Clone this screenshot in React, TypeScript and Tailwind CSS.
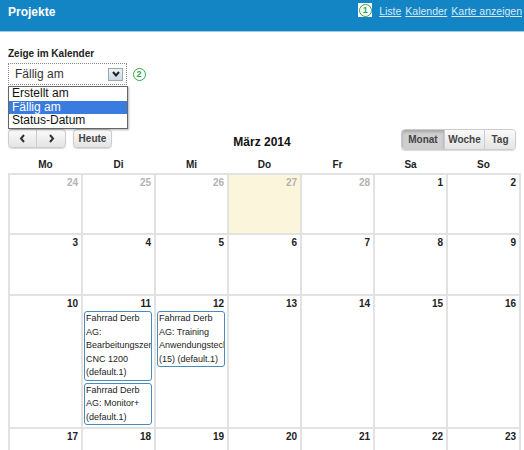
import React from "react";

const days = ["Mo", "Di", "Mi", "Do", "Fr", "Sa", "So"];

type Ev = { lines: string[] };
type Cell = { n: number; other?: boolean; today?: boolean; events?: Ev[] };

const weeks: { h: string; cells: Cell[] }[] = [
  {
    h: "h-[58px]",
    cells: [
      { n: 24, other: true },
      { n: 25, other: true },
      { n: 26, other: true },
      { n: 27, other: true, today: true },
      { n: 28, other: true },
      { n: 1 },
      { n: 2 },
    ],
  },
  { h: "h-[59px]", cells: [3, 4, 5, 6, 7, 8, 9].map((n) => ({ n })) },
  {
    h: "h-[131px]",
    cells: [
      { n: 10 },
      {
        n: 11,
        events: [
          { lines: ["Fahrrad Derb", "AG:", "Bearbeitungszentrum", "CNC 1200", "(default.1)"] },
          { lines: ["Fahrrad Derb", "AG: Monitor+", "(default.1)"] },
        ],
      },
      {
        n: 12,
        events: [{ lines: ["Fahrrad Derb", "AG: Training", "Anwendungstechnik", "(15) (default.1)"] }],
      },
      { n: 13 },
      { n: 14 },
      { n: 15 },
      { n: 16 },
    ],
  },
  { h: "h-[60px]", cells: [17, 18, 19, 20, 21, 22, 23].map((n) => ({ n })) },
];

function Marker({ n, boxed }: { n: number; boxed?: boolean }) {
  return (
    <span className={`flex items-center justify-center w-[14px] h-[14px] ${boxed ? "bg-white" : ""}`}>
      <span className="flex items-center justify-center w-[13px] h-[13px] rounded-full border-[1.5px] border-[#2ea84a] text-[#2ea84a] text-[9px] font-bold leading-none">
        {n}
      </span>
    </span>
  );
}

function Chevron({ dir }: { dir: "left" | "right" }) {
  return (
    <svg width="7" height="9" viewBox="0 0 7 9">
      <path
        d={dir === "left" ? "M5 1 L2 4.5 L5 8" : "M2 1 L5 4.5 L2 8"}
        fill="none"
        stroke="#333"
        strokeWidth="2"
      />
    </svg>
  );
}

export default function App() {
  return (
    <div className="relative w-[524px] h-[450px] overflow-hidden bg-white font-['Liberation_Sans',Arial,sans-serif] text-[#333]">
      {/* header */}
      <div className="h-[31px] bg-[#1384c4] flex justify-between items-start pl-2 pr-[2px]">
        <span className="mt-[3px] text-white font-bold text-[12px]">Projekte</span>
        <div className="flex items-start gap-[4px] mt-[3px] text-[10.5px] text-[#dbe9f4]">
          <span className="mr-[3px]">
            <Marker n={1} boxed />
          </span>
          <a className="underline mt-[1px]">Liste</a>
          <a className="underline mt-[1px]">Kalender</a>
          <a className="underline mt-[1px]">Karte anzeigen</a>
        </div>
      </div>
      <div className="h-[1px] bg-[#9ccbe8]" />

      <div className="px-2">
        {/* filter */}
        <div className="mt-[16px] text-[10px] leading-[12px] font-bold text-[#222]">Zeige im Kalender</div>
        <div className="relative mt-[3px] flex items-center gap-[5px]">
          <div className="w-[119px] h-[22px] border border-dotted border-[#888] bg-white flex items-center justify-between pl-[6px] pr-[3px]">
            <span className="text-[12px] text-[#333]">Fällig am</span>
            <span className="w-[15px] h-[13px] border border-[#9aa] bg-gradient-to-b from-[#eef3f8] to-[#cdd9e6] flex items-center justify-center">
              <svg width="8" height="6" viewBox="0 0 8 6">
                <path d="M1 1 L4 4.5 L7 1" fill="none" stroke="#222" strokeWidth="2" />
              </svg>
            </span>
          </div>
          <Marker n={2} />
          {/* open dropdown */}
          <div className="absolute left-0 top-[23px] w-[120px] border border-[#666] bg-white shadow-[1px_1px_2px_rgba(0,0,0,0.3)] text-[12px] leading-[13.5px] text-[#111] z-10">
            <div className="pl-[3px]">Erstellt am</div>
            <div className="pl-[3px] bg-[#3a7be0] text-white">Fällig am</div>
            <div className="pl-[3px]">Status-Datum</div>
          </div>
        </div>

        {/* toolbar */}
        <div className="mt-[43px] h-[24px] flex items-start justify-between relative">
          <div className="flex items-start gap-[7px] mt-[1px]">
            <div className="flex h-[19px] rounded-[4px] border border-[#ccc] bg-gradient-to-b from-[#fafafa] to-[#e4e4e4] shadow-[0_1px_1px_rgba(0,0,0,0.15)]">
              <span className="w-[28px] flex items-center justify-center border-r border-[#ccc]">
                <Chevron dir="left" />
              </span>
              <span className="w-[28px] flex items-center justify-center">
                <Chevron dir="right" />
              </span>
            </div>
            <span className="h-[19px] w-[39px] flex items-center justify-center rounded-[4px] border border-[#ccc] bg-gradient-to-b from-[#fafafa] to-[#e4e4e4] shadow-[0_1px_1px_rgba(0,0,0,0.15)] text-[10px] font-bold text-[#444]">
              Heute
            </span>
          </div>
          <span className="absolute left-0 right-0 top-[7px] text-center text-[12px] leading-[14px] font-bold text-[#111]">
            März 2014
          </span>
          <div className="flex h-[21px] mt-[1px] rounded-[4px] border border-[#ccc] shadow-[0_1px_1px_rgba(0,0,0,0.15)] text-[10px] font-bold text-[#444] overflow-hidden">
            <span className="w-[42px] flex items-center justify-center bg-[#cfcfcf] shadow-[inset_0_2px_3px_rgba(0,0,0,0.2)]">Monat</span>
            <span className="w-[40px] flex items-center justify-center border-l border-[#ccc] bg-gradient-to-b from-[#fafafa] to-[#e4e4e4]">Woche</span>
            <span className="w-[31px] flex items-center justify-center border-l border-[#ccc] bg-gradient-to-b from-[#fafafa] to-[#e4e4e4]">Tag</span>
          </div>
        </div>

        {/* day names */}
        <div className="mt-[7px] grid grid-cols-[repeat(7,73px)] px-[1px] h-[14px] text-[10px] leading-[12px] font-bold text-[#222]">
          {days.map((d) => (
            <div key={d} className="text-center">{d}</div>
          ))}
        </div>

        {/* month grid */}
        <div className="w-[513px] bg-[#e2e2e2] p-[2px] flex flex-col gap-[2px]">
          {weeks.map((w, wi) => (
            <div key={wi} className={`grid grid-cols-[repeat(7,71px)] gap-[2px] ${w.h}`}>
              {w.cells.map((c) => (
                <div key={c.n} className={`${c.today ? "bg-[#fbf5dc]" : "bg-white"} flex flex-col overflow-hidden`}>
                  <div
                    className={`text-right pr-[3px] pt-[2px] text-[10px] leading-[12px] font-bold ${
                      c.other ? "text-[#b3b3b3]" : "text-[#222]"
                    }`}
                  >
                    {c.n}
                  </div>
                  <div className="mt-[1px] flex flex-col gap-[2px]">
                    {c.events?.map((e, ei) => (
                      <div
                        key={ei}
                        className="ml-[1px] mr-[2px] border border-[#4a8bbd] rounded-[3px] bg-white pl-[1px] overflow-hidden text-[9px] leading-[13.5px] text-[#222]"
                      >
                        {e.lines.map((l) => (
                          <div key={l} className="whitespace-nowrap">{l}</div>
                        ))}
                      </div>
                    ))}
                  </div>
                </div>
              ))}
            </div>
          ))}
        </div>
      </div>
    </div>
  );
}
